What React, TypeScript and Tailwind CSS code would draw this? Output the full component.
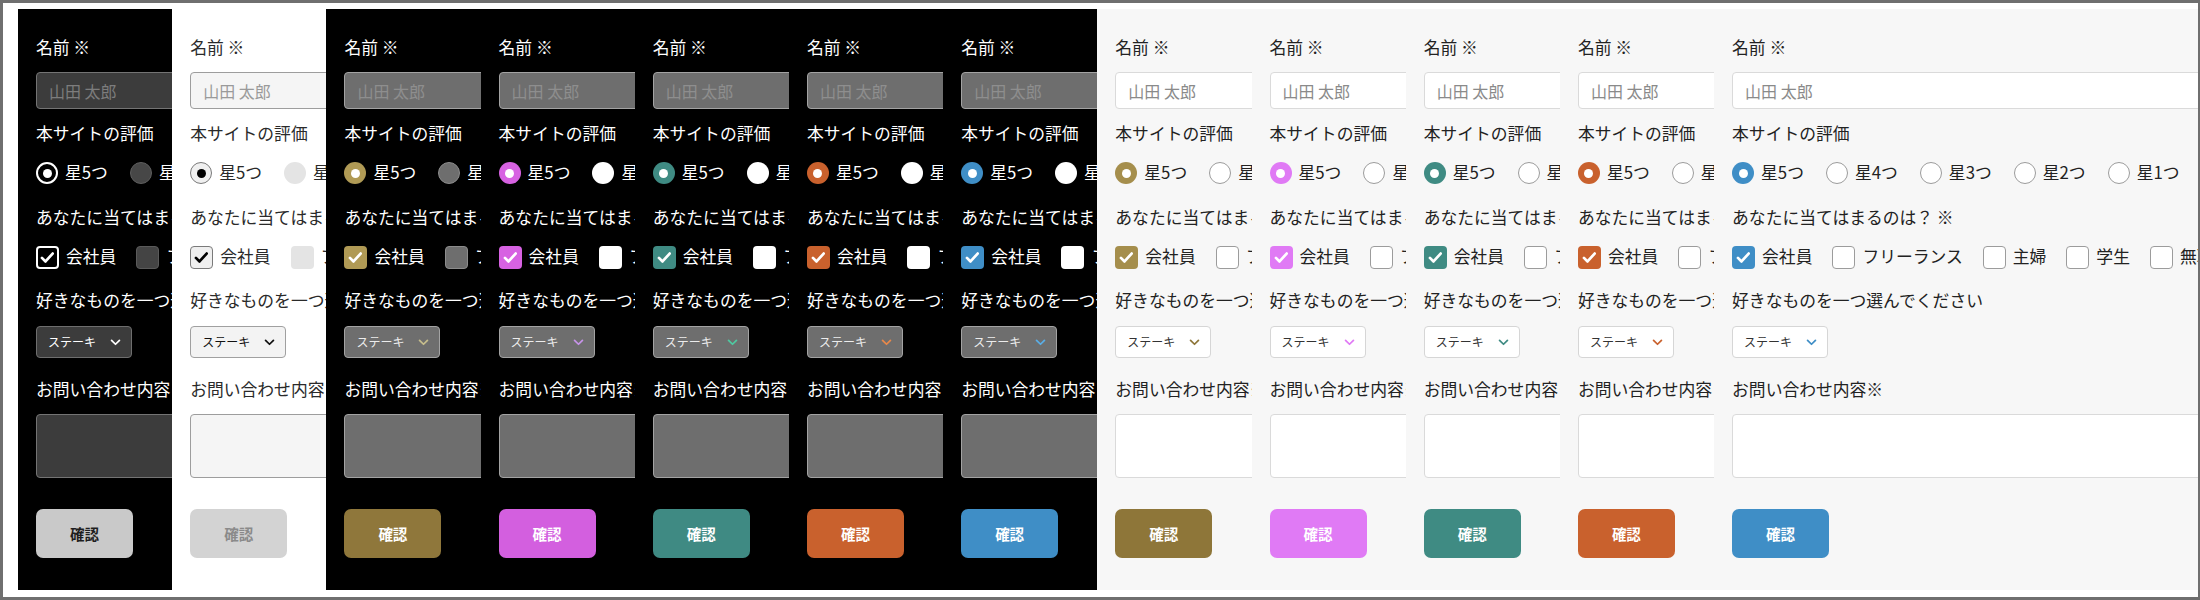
import type { ReactNode } from "react";

type Theme = {
  panel: string;
  text: string;
  field: string;
  select: string;
  chevron: string;
  radioOn: string;
  radioDot: string;
  radioOff: string;
  boxOn: string;
  check: string;
  boxOff: string;
  button: string;
};

const RATINGS = ["星5つ", "星4つ", "星3つ", "星2つ", "星1つ"];
const ROLES = ["会社員", "フリーランス", "主婦", "学生", "無職"];

// dark accent panels share everything except the accent colours
function darkAccent(
  control: string,
  button: string,
  chevron: string,
  off: string,
): Theme {
  return {
    panel: "w-[154.2px] bg-black",
    text: "text-white",
    field:
      "bg-[#6e6e6e] border border-[#a3a3a3] placeholder:text-[#8e8e8e] text-white",
    select: "bg-[#6e6e6e] border border-[#a3a3a3] text-[#ececec]",
    chevron,
    radioOn: control,
    radioDot: "bg-white",
    radioOff: off,
    boxOn: control,
    check: "#ffffff",
    boxOff: off,
    button: `${button} text-white`,
  };
}

function lightAccent(
  control: string,
  button: string,
  chevron: string,
  wide = false,
): Theme {
  return {
    panel: wide ? "flex-1 bg-[#f7f7f7]" : "w-[154.2px] bg-[#f7f7f7]",
    text: "text-[#222]",
    field:
      "bg-white border border-[#dadada] placeholder:text-[#8a8a8a] text-[#222]",
    select: "bg-white border border-[#d6d6d6] text-[#333]",
    chevron,
    radioOn: control,
    radioDot: "bg-white",
    radioOff: "bg-white border-[1.5px] border-[#9c9c9c]",
    boxOn: control,
    check: "#ffffff",
    boxOff: "bg-white border-[1.5px] border-[#9c9c9c]",
    button: `${button} text-white`,
  };
}

const THEMES: Theme[] = [
  {
    panel: "w-[154.2px] bg-black",
    text: "text-white",
    field:
      "bg-[#3c3c3c] border border-[#747474] placeholder:text-[#7d7d7d] text-white",
    select: "bg-[#3c3c3c] border border-[#6e6e6e] text-white",
    chevron: "#ffffff",
    radioOn: "bg-black border-2 border-white",
    radioDot: "bg-white",
    radioOff: "bg-[#474747] border border-[#5e5e5e]",
    boxOn: "bg-black border-2 border-white",
    check: "#ffffff",
    boxOff: "bg-[#444] border border-[#5a5a5a]",
    button: "bg-[#c9c9c9] text-[#1e1e1e]",
  },
  {
    panel: "w-[154.2px] bg-white",
    text: "text-[#2a2a2a]",
    field:
      "bg-[#f5f5f5] border border-[#9d9d9d] placeholder:text-[#9a9a9a] text-[#222]",
    select: "bg-[#f3f3f3] border border-[#a0a0a0] text-[#111]",
    chevron: "#111111",
    radioOn: "bg-[#f0f0f0] border-[1.5px] border-[#7a7a7a]",
    radioDot: "bg-black",
    radioOff: "bg-[#e4e4e4]",
    boxOn: "bg-[#efefef] border-[1.5px] border-[#7a7a7a]",
    check: "#000000",
    boxOff: "bg-[#e4e4e4]",
    button: "bg-[#d3d3d3] text-[#8a8a8a]",
  },
  darkAccent(
    "bg-[#b09a55]",
    "bg-[#8f773b]",
    "#c6bd8c",
    "bg-[#6e6e6e] border border-[#8c8c8c]",
  ),
  darkAccent("bg-[#d762e2]", "bg-[#d35fdf]", "#c693e8", "bg-white"),
  darkAccent("bg-[#3f8b83]", "bg-[#3f8a83]", "#4fc9a1", "bg-white"),
  darkAccent("bg-[#c9612d]", "bg-[#c9612d]", "#e8884a", "bg-white"),
  darkAccent("bg-[#3f8ec6]", "bg-[#3f8ec6]", "#5aaee6", "bg-white"),
  lightAccent("bg-[#a58e4c]", "bg-[#8e7639]", "#8e7639"),
  lightAccent("bg-[#e07af5]", "bg-[#e07af5]", "#e07af5"),
  lightAccent("bg-[#3f8b83]", "bg-[#3f8b83]", "#3f8b83"),
  lightAccent("bg-[#c9612d]", "bg-[#c9612d]", "#c9612d"),
  lightAccent("bg-[#3f8ec6]", "bg-[#3f8ec6]", "#3f8ec6", true),
];

function Label({ children }: { children: ReactNode }) {
  return <p className="h-6 whitespace-nowrap leading-6">{children}</p>;
}

function Radio({ on, label, t }: { on: boolean; label: string; t: Theme }) {
  return (
    <span className="mr-[22px] flex shrink-0 items-center gap-[7px]">
      <span
        className={`flex h-[22px] w-[22px] items-center justify-center rounded-full ${
          on ? t.radioOn : t.radioOff
        }`}
      >
        {on && <span className={`h-[9px] w-[9px] rounded-full ${t.radioDot}`} />}
      </span>
      <span className="whitespace-nowrap">{label}</span>
    </span>
  );
}

function Check({ on, label, t }: { on: boolean; label: string; t: Theme }) {
  return (
    <span className="mr-[20px] flex shrink-0 items-center gap-[7px]">
      <span
        className={`flex h-[23px] w-[23px] items-center justify-center rounded-[4px] ${
          on ? t.boxOn : t.boxOff
        }`}
      >
        {on && (
          <svg viewBox="0 0 24 24" className="h-[19px] w-[19px]" fill="none">
            <path
              d="M5 12.5l4.5 4.5 9-10"
              stroke={t.check}
              strokeWidth="3.4"
              strokeLinecap="round"
              strokeLinejoin="round"
            />
          </svg>
        )}
      </span>
      <span className="whitespace-nowrap">{label}</span>
    </span>
  );
}

function FormPanel({ t }: { t: Theme }) {
  return (
    <div className={`h-full shrink-0 overflow-hidden ${t.panel}`}>
      <div className={`w-[520px] pl-[18px] pt-[26px] text-[16.8px] ${t.text}`}>
        <Label>名前 ※</Label>
        <input
          readOnly
          placeholder="山田 太郎"
          className={`mt-[13px] block h-[37px] w-full rounded-[4px] px-3 text-[16px] outline-none ${t.field}`}
        />

        <div className="mt-3">
          <Label>本サイトの評価</Label>
        </div>
        <div className="mt-4 flex h-6 items-center">
          {RATINGS.map((r, i) => (
            <Radio key={r} on={i === 0} label={r} t={t} />
          ))}
        </div>

        <div className="mt-5">
          <Label>あなたに当てはまるのは？ ※</Label>
        </div>
        <div className="mt-4 flex h-6 items-center">
          {ROLES.map((r, i) => (
            <Check key={r} on={i === 0} label={r} t={t} />
          ))}
        </div>

        <div className="mt-[19px]">
          <Label>好きなものを一つ選んでください</Label>
        </div>
        <div
          className={`mt-[14px] flex h-8 w-[96px] items-center gap-[14px] rounded-[4px] pl-[11px] text-[12px] ${t.select}`}
        >
          <span className="whitespace-nowrap">ステーキ</span>
          <svg viewBox="0 0 12 8" className="h-[7px] w-[11px]" fill="none">
            <path
              d="M1.5 1.5L6 6l4.5-4.5"
              stroke={t.chevron}
              strokeWidth="2"
              strokeLinecap="round"
              strokeLinejoin="round"
            />
          </svg>
        </div>

        <div className="mt-[19px]">
          <Label>お問い合わせ内容※</Label>
        </div>
        <textarea
          readOnly
          className={`mt-[13px] block h-16 w-full resize-none rounded-[4px] outline-none ${t.field}`}
        />

        <button
          type="button"
          className={`mt-[31px] block h-[49px] w-[97px] rounded-[7px] text-[14.5px] font-bold ${t.button}`}
        >
          確認
        </button>
      </div>
    </div>
  );
}

export default function App() {
  return (
    <div className="h-[600px] w-[2200px] border-[3px] border-r-2 border-[#6f6f6f] bg-white pb-[4px] pl-[15px] pt-[6px] font-['Noto_Sans_CJK_JP','Noto_Sans',sans-serif]">
      <div className="flex h-[581px]">
        {THEMES.map((t, i) => (
          <FormPanel key={i} t={t} />
        ))}
      </div>
    </div>
  );
}
